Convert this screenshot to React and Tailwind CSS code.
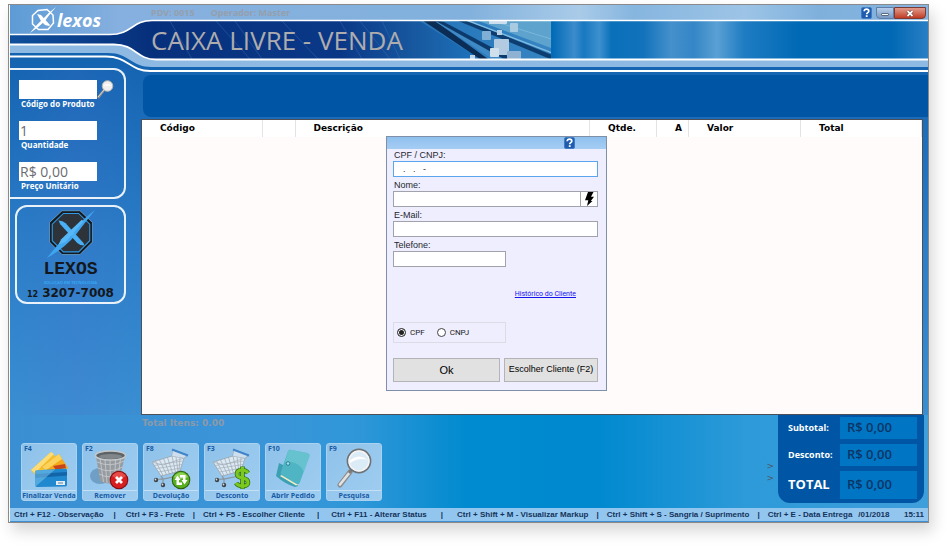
import { useState } from 'react';

const columns = [
  { label: 'Código', width: 'w-[120px]' },
  { label: '', width: 'w-[33px]' },
  { label: 'Descrição', width: '' },
  { label: 'Qtde.', width: 'w-[67px]' },
  { label: 'A', width: 'w-[32px]' },
  { label: 'Valor', width: 'w-[112px]' },
  { label: 'Total', width: 'w-[121px]' },
];

const shortcuts = [
  { text: 'Ctrl + F12 - Observação', gap: 'px-2.5' },
  { text: 'Ctrl + F3 - Frete', gap: 'px-2' },
  { text: 'Ctrl + F5 - Escolher Cliente', gap: 'px-3' },
  { text: 'Ctrl + F11 - Alterar Status', gap: 'px-3.5' },
  { text: 'Ctrl + Shift + M - Visualizar Markup', gap: 'px-2' },
  { text: 'Ctrl + Shift + S - Sangria / Suprimento', gap: 'px-2' },
];

const HelpIcon = () => (
  <svg width="11" height="12" viewBox="0 0 11 12" aria-hidden="true">
    <rect x="0.5" y="0.5" width="10" height="11" rx="1.5" fill="#1f5cae" stroke="#3f7cc4" />
    <path d="M3.2 4.3C3.2 2.9 4.1 2.2 5.5 2.2S7.8 3 7.8 4.2C7.8 5.6 5.7 5.6 5.7 7.2" fill="none" stroke="#fff" strokeWidth="1.7" />
    <rect x="4.8" y="8.2" width="1.8" height="1.8" fill="#fff" />
  </svg>
);

const CartBody = () => (
  <g fill="none">
    <path d="M3 14L23 8L35 10L31 23L12 28Z" fill="#e8eef4" fillOpacity="0.85" stroke="#98a3ae" strokeWidth="0.8" />
    <path d="M6.500 13L14 27.500M10.500 12L17.500 26.500M14.500 10.500L20.500 26M18.500 9.500L23.500 25M23 8L26.500 24.500M27 9L29 24M31 9.500L30 23" stroke="#9aa4ae" strokeWidth="0.7" />
    <path d="M5 17.500L33.500 13M7.500 20.500L33 16.500M9.500 24L32 20" stroke="#a5aeb7" strokeWidth="0.7" />
    <path d="M3 14L14 17L35 10" stroke="#a9b3bd" strokeWidth="0.8" />
    <path d="M24 2L23 8M38 8L35 10" stroke="#9aa6b2" strokeWidth="1" />
    <path d="M24 2L23 8L35 10L38 7Z" fill="#dbe5ef" fillOpacity="0.8" />
    <path d="M23 1.500L39 7.500" stroke="#3f84ca" strokeWidth="2" />
    <path d="M12 28L14 31L29 28M7 31.500L14 31L14 36" stroke="#8a949e" strokeWidth="1.200" />
    <ellipse cx="7" cy="32" rx="2.200" ry="2.200" fill="#3d4349" />
    <ellipse cx="14" cy="37" rx="2.200" ry="2.200" fill="#3d4349" />
    <circle cx="6.500" cy="31.500" r="0.9" fill="#d6dadd" />
    <circle cx="13.500" cy="36.500" r="0.9" fill="#d6dadd" />
  </g>
);

const CardsIcon = () => (
  <svg width="44" height="40" viewBox="0 0 44 40" aria-hidden="true">
    <path d="M4 22L24 4L29 9L10 29Z" fill="#f2bf2e" />
    <path d="M4 22L24 4L27 6L8 25Z" fill="#fbdc76" />
    <path d="M14 19L32 6L41 20L30 28Z" fill="#f4a81c" />
    <path d="M15 19L32 6L35 11L19 22Z" fill="#fcd25a" />
    <path d="M26 18L38 16L39 20L29 22Z" fill="#c8451c" />
    <path d="M9 22.500L38 20.500Q40 20.500 40 22V37Q40 38.500 38 38.500L10 39Q8 39 8 37V24Q8 22.500 9 22.500Z" fill="#2088ce" />
    <path d="M8 26L40 24V27.500L8 30Z" fill="#1464a8" />
    <path d="M8 39L28 21.500L9 22.500Q8 22.500 8 24Z" fill="#7cc4ec" fillOpacity="0.55" />
    <rect x="29" y="33" width="9" height="4" fill="#e6eef4" />
    <path d="M31 35H36" stroke="#5b7fa0" strokeWidth="1" />
  </svg>
);

const TrashIcon = () => (
  <svg width="44" height="42" viewBox="0 0 44 42" aria-hidden="true">
    <ellipse cx="12" cy="28" rx="10" ry="8" fill="#5b8bb0" fillOpacity="0.65" />
    <path d="M8 8L12 33Q21 38 31 33L37 8Z" fill="#969b9f" />
    <path d="M12 10L15.500 34M17 12L19 35M22 12L22.500 35.500M27.500 12L26.500 35M32.500 10.500L29.500 34M9 14Q22 20 36 13M10 20Q22 26 34.500 19M11 26Q22 32 33 25" stroke="#c9cdd0" strokeWidth="0.8" fill="none" />
    <ellipse cx="22.500" cy="7.500" rx="15" ry="4.500" fill="#5d6267" stroke="#c4c8ca" strokeWidth="1.600" />
    <ellipse cx="22.500" cy="8.500" rx="11.500" ry="2.600" fill="#80868a" />
    <circle cx="31" cy="32" r="9.300" fill="#7c0f12" />
    <circle cx="31" cy="32" r="8.300" fill="#d71f22" />
    <path d="M24 28Q31 20 38 28Q31 33 24 28Z" fill="#f06a62" fillOpacity="0.6" />
    <path d="M28 29L34 35M34 29L28 35" stroke="#fff" strokeWidth="2.800" />
  </svg>
);

const ReturnIcon = () => (
  <svg width="44" height="42" viewBox="0 0 44 42" aria-hidden="true">
    <CartBody />
    <circle cx="32" cy="32" r="9.300" fill="#2f5b10" />
    <circle cx="32" cy="32" r="8.300" fill="#58b021" />
    <path d="M24.500 29Q32 20 39.500 29Q32 33 24.500 29Z" fill="#b5e77c" fillOpacity="0.6" />
    <path d="M25.500 32L28.500 27.500L31.500 32H30V34.500H33V37H27.500V32ZM38.500 32L35.500 36.500L32.500 32H34V29.500H31V27H36.500V32Z" fill="#fff" />
  </svg>
);

const DollarIcon = () => (
  <svg width="44" height="42" viewBox="0 0 44 42" aria-hidden="true">
    <CartBody />
    <path d="M38 25Q36 22 32 22Q27 22 27 26Q27 29 32.500 30Q38 31 38 34.500Q38 38 32.500 38Q28 38 26 35M32.500 18.500V41" fill="none" stroke="#2f7411" strokeWidth="4.600" />
    <path d="M38 25Q36 22 32 22Q27 22 27 26Q27 29 32.500 30Q38 31 38 34.500Q38 38 32.500 38Q28 38 26 35M32.500 19V40.500" fill="none" stroke="#7cc81e" strokeWidth="3" />
  </svg>
);

const FolderIcon = () => (
  <svg width="44" height="40" viewBox="0 0 44 40" aria-hidden="true">
    <path d="M5 28L8 15L12 17L27 38L24 39Q14 36 5 28Z" fill="#3d9fb4" />
    <path d="M9 28L25 37.500L28 36L12 26Z" fill="#f3efc3" />
    <path d="M17 3Q18 1 21 2L36 5Q39 6 38.500 8L29 34Q28 37.500 25.500 36L11 27.500Q9 26.500 10 23.500Z" fill="#4fb4c3" />
    <path d="M17 3Q18 1 21 2L36 5Q39 6 38.500 8L33 24Q27 12 14 14Z" fill="#74ccd6" fillOpacity="0.6" />
    <circle cx="17" cy="15.500" r="1.800" fill="#a4e0e8" stroke="#22788c" strokeWidth="0.9" />
  </svg>
);

const SearchIcon = () => (
  <svg width="44" height="40" viewBox="0 0 44 40" aria-hidden="true">
    <path d="M8 37L18 24" stroke="#8c8c8c" strokeWidth="5" strokeLinecap="round" />
    <path d="M8 36.500L18 24" stroke="#e3e3e3" strokeWidth="2.600" strokeLinecap="round" />
    <path d="M17 25L21 20" stroke="#7b7b7b" strokeWidth="3" />
    <circle cx="27" cy="13" r="11.500" fill="#d6e8f5" stroke="#6f7376" strokeWidth="1.800" />
    <circle cx="27" cy="13" r="10" fill="#dcecf7" stroke="#f5f5f5" strokeWidth="1.400" />
    <path d="M18 12Q27 5 36 12Q27 9 18 15Z" fill="#fff" />
  </svg>
);

const actions = [
  { hotkey: 'F4', label: 'Finalizar Venda', Icon: CardsIcon },
  { hotkey: 'F2', label: 'Remover', Icon: TrashIcon },
  { hotkey: 'F8', label: 'Devolução', Icon: ReturnIcon },
  { hotkey: 'F3', label: 'Desconto', Icon: DollarIcon },
  { hotkey: 'F10', label: 'Abrir Pedido', Icon: FolderIcon },
  { hotkey: 'F9', label: 'Pesquisa', Icon: SearchIcon },
];

// Curved bands behind the title, they run on past the right edge
const HeaderArt = () => (
  <svg className="absolute inset-x-0 top-0 h-[72px] w-full" aria-hidden="true">
    <defs>
      <linearGradient id="topBand" gradientUnits="userSpaceOnUse" x1="0" y1="0" x2="918" y2="0">
        <stop offset="0" stopColor="#5d9bd6" />
        <stop offset="0.12" stopColor="#86b0df" />
        <stop offset="0.5" stopColor="#82b1dd" />
        <stop offset="0.62" stopColor="#a9cbe8" />
        <stop offset="0.68" stopColor="#86b5df" />
        <stop offset="0.8" stopColor="#9dc4e6" />
        <stop offset="0.88" stopColor="#7fb0dc" />
        <stop offset="1" stopColor="#86b4e0" />
      </linearGradient>
      <linearGradient id="darkBand" gradientUnits="userSpaceOnUse" x1="0" y1="0" x2="918" y2="0">
        <stop offset="0" stopColor="#0e4f9c" />
        <stop offset="0.15" stopColor="#07307c" />
        <stop offset="0.36" stopColor="#0a3887" />
        <stop offset="0.44" stopColor="#17589f" />
        <stop offset="0.5" stopColor="#1d70b8" />
        <stop offset="0.588" stopColor="#4a92c8" />
        <stop offset="0.59" stopColor="#0069b5" />
        <stop offset="0.615" stopColor="#3b8ccb" />
        <stop offset="0.625" stopColor="#1878c0" />
        <stop offset="0.642" stopColor="#3d90ce" />
        <stop offset="0.655" stopColor="#0a70ba" />
        <stop offset="0.69" stopColor="#1272bb" />
        <stop offset="0.72" stopColor="#4590cc" />
        <stop offset="0.745" stopColor="#3486c6" />
        <stop offset="0.77" stopColor="#5aa0d4" />
        <stop offset="0.8" stopColor="#1e7cc2" />
        <stop offset="0.86" stopColor="#0069b5" />
        <stop offset="0.96" stopColor="#0068b4" />
        <stop offset="1" stopColor="#2a7fc4" />
      </linearGradient>
      <clipPath id="photoClip">
        <rect x="140" y="16" width="401" height="38" />
      </clipPath>
    </defs>
    <path d="M0 0H3000V16H142C122 16 122 29 100 29H0Z" fill="url(#topBand)" />
    <path d="M0 30H100C122 30 122 16 142 16H3000V55H146C126 55 126 39.500 104 39.500H0Z" fill="url(#darkBand)" />
    <g clipPath="url(#photoClip)">
      <path d="M408 15L500 15L600 54L470 54Z" fill="#2f7fbf" fillOpacity="0.7" />
      <path d="M412 15L424 15L478 54L470 54Z" fill="#0a2c55" />
      <path d="M426 17L434 17L492 54L482 54Z" fill="#3f8ac4" />
      <path d="M424 15L434 17L504 54L494 54Z" fill="#0c3a6c" />
      <path d="M446 15L456 15L545 51V56Z" fill="#0e3e70" />
      <path d="M456 15L545 49" stroke="#7fbbe2" strokeWidth="1.500" />
      <path d="M466 15H541V43Z" fill="#5ea3cd" />
      <path d="M480 15L541 34" stroke="#86c0e0" strokeOpacity="0.7" />
      <path d="M160 16L182 54M206 16L240 54M225 16L252 54M272 16L308 54M330 16L352 54M350 16L380 54M372 16L390 54" stroke="#4a7cc0" strokeOpacity="0.35" />
      <rect x="479" y="14" width="18" height="5" rx="1" fill="#c9ddec" />
      <rect x="500" y="18" width="8" height="9" rx="1" fill="#a9cbe2" />
      <rect x="472" y="26" width="9" height="9" rx="1" fill="#7fafd4" />
      <rect x="487" y="25" width="5" height="5" fill="#b5d0e4" />
      <rect x="484" y="34" width="15" height="16" rx="1" fill="#b3cbe0" />
      <rect x="480" y="43" width="9" height="9" rx="1" fill="#cfdfec" />
      <rect x="497" y="46" width="14" height="8" rx="1" fill="#8fb2d2" />
      <rect x="460" y="50" width="5" height="5" fill="#bcd4e8" />
    </g>
    <path d="M0 40H104C126 40 126 55 146 55H3000V62H142C120 62 120 48 98 48H0Z" fill="#8db9e2" />
    <path d="M0 29.500H100C122 29.500 122 15.500 142 15.500H3000" fill="none" stroke="#fff" strokeWidth="1.600" />
    <path d="M0 39.500H104C126 39.500 126 54.500 146 54.500H3000" fill="none" stroke="#fff" strokeWidth="1.800" />
    <path d="M0 51.500H96C118 51.500 120 66 140 66H3000" fill="none" stroke="#fff" strokeWidth="1.800" />
  </svg>
);

const LexosMark = () => (
  <svg className="h-[26px] w-7" viewBox="0 0 28 26" aria-hidden="true">
    <path d="M9 3.500L18 2.500L24 8L24.500 16L19 22.500L9.500 22.500L3.500 17L3.500 8.500Z" fill="none" stroke="#fff" strokeWidth="1.500" />
    <path d="M1 26Q9 16 13 13Q20 5 27 0Q20 8 16 14Q10 20 1 26Z" fill="#fff" />
    <path d="M8 7L12 8L21 18L20 19L16 18L12 14Z" fill="#fff" />
  </svg>
);

const SupportLogo = () => (
  <svg width="58" height="50" viewBox="0 0 60 56" aria-hidden="true">
    <path d="M20 2H40L54 15V37L40 51H20L6 37V15Z" fill="#15191e" stroke="#8cc6f0" strokeOpacity="0.6" strokeWidth="1" />
    <path d="M21.500 5H38.500L51 17V35.500L38.500 48H21.500L9 35.500V17Z" fill="#2d3339" stroke="#2d9bea" strokeWidth="1.200" />
    <path d="M3 55Q16 38 26 30Q42 12 57 1Q45 16 36 28Q24 43 3 55Z" fill="#3fa5ee" />
    <path d="M16 13Q21 13 24 16L44 38L45 41Q40 41 37 38L18 17Z" fill="#49b0f5" />
    <path d="M42 12L44 14L24 37L16 40L19 34Z" fill="#58b7f6" />
  </svg>
);

const ProductField = ({ id, label, value, onChange }) => (
  <div className="w-[78px]">
    <input
      id={id}
      className="block h-[19px] w-full bg-white px-px text-[14px] leading-[19px] text-[#6b6b70] outline-none"
      value={value}
      onChange={onChange}
    />
    <label htmlFor={id} className="block pl-0.5 text-[8px] leading-[10px] font-bold whitespace-nowrap text-white">
      {label}
    </label>
  </div>
);

const TotalRow = ({ label, value, big }) => (
  <div className="flex items-center">
    <span className={`w-[52px] font-bold text-white ${big ? 'text-[13px]' : 'text-[9px]'}`}>{label}</span>
    <span className={`flex flex-1 items-center bg-[#0075c4] pl-[7px] text-[13px] font-semibold text-[#0c3566] ${big ? 'h-7' : 'h-[22px]'}`}>
      {value}
    </span>
  </div>
);

const CustomerDialog = () => {
  const [docType, setDocType] = useState('CPF');
  const [documentId, setDocumentId] = useState('  .   .   -');

  const inputClass = 'block h-4 w-full border border-[#a0a3ac] bg-white px-1 text-[9px] outline-none';
  const labelClass = 'block pl-px text-[9px] leading-[12px] text-[#26262e]';

  return (
    <div
      role="dialog"
      aria-label="Cliente"
      className="absolute top-4 left-[244px] w-[221px] border border-[#7f8fa8] bg-[#eeeeff] font-['Liberation_Sans',sans-serif]"
    >
      <div className="flex h-3 justify-end bg-linear-to-b from-[#8fc0ee] to-[#a5cdf3] pr-[31px]">
        <button type="button" aria-label="Ajuda">
          <HelpIcon />
        </button>
      </div>
      <form className="flex flex-col gap-0.5 pr-2 pb-2 pl-1.5" onSubmit={(e) => e.preventDefault()}>
        <div>
          <label htmlFor="documento" className={labelClass}>CPF / CNPJ:</label>
          <input
            id="documento"
            className="block h-4 w-full border border-[#5aa5ee] bg-white px-1 text-[9px] text-[#333] outline-none"
            value={documentId}
            onChange={(e) => setDocumentId(e.target.value)}
          />
        </div>
        <div>
          <label htmlFor="nome" className={labelClass}>Nome:</label>
          <div className="flex">
            <input id="nome" className={inputClass} />
            <button type="button" aria-label="Buscar" className="flex h-4 w-[17px] shrink-0 items-center justify-center border border-l-0 border-[#a0a3ac] bg-white">
              <svg width="11" height="14" viewBox="0 0 11 14" aria-hidden="true">
                <path d="M4 0L9.500 0L7 4.800L10 4.800L6.800 9L8.500 9L3 14L4.300 8.200L1 8.200Z" fill="#000" />
              </svg>
            </button>
          </div>
        </div>
        <div>
          <label htmlFor="email" className={labelClass}>E-Mail:</label>
          <input id="email" className={inputClass} />
        </div>
        <div className="w-[113px]">
          <label htmlFor="telefone" className={labelClass}>Telefone:</label>
          <input id="telefone" className={inputClass} />
        </div>
        <a href="#historico" className="mt-5 self-end pr-[22px] font-['Roboto',sans-serif] text-[7px] leading-[10px] text-[#1414ee] underline">
          Histórico do Cliente
        </a>
        <fieldset className="mt-[21px] w-[113px] border border-[#dcdce6] px-[3px] font-['Roboto',sans-serif] text-[8px] text-[#222]">
          <div className="flex h-[19px] items-center gap-3">
            {['CPF', 'CNPJ'].map((type) => (
              <label key={type} className="flex items-center gap-1">
                <input
                  type="radio"
                  name="tipo"
                  className="size-[9px] appearance-none rounded-full border border-[#444] bg-white checked:bg-[#222] checked:shadow-[inset_0_0_0_1px_white]"
                  checked={docType === type}
                  onChange={() => setDocType(type)}
                />
                {type}
              </label>
            ))}
          </div>
        </fieldset>
        <div className="mt-[13px] flex gap-1">
          <button type="submit" className="h-6 flex-1 border border-[#b4b4b6] bg-[#e1e1e1] text-[11px] text-black">
            Ok
          </button>
          <button type="button" className="h-6 w-[94px] border border-[#b4b4b6] bg-[#e1e1e1] text-[9px] whitespace-nowrap text-black">
            Escolher Cliente (F2)
          </button>
        </div>
      </form>
    </div>
  );
};

const App = () => {
  const [code, setCode] = useState('');
  const [quantity, setQuantity] = useState('1');
  const [price, setPrice] = useState('R$ 0,00');

  return (
    <div className="bg-white pt-1 pr-5 pb-6 pl-2 font-['Open_Sans',sans-serif]">
      <div className="border border-[#8a8a8c] bg-white pl-px shadow-[4px_8px_14px_rgba(0,0,0,0.16)]">
        <div className="bg-linear-to-b from-[#0b5cab] via-[#2a7cc7] via-45% to-[#3a8fd2] to-80%">
          {/* Title */}
          <header className="relative h-[63px]">
            <HeaderArt />
            <div className="relative flex items-start">
              <div className="flex w-[141px] items-center pt-0.5 pl-[19px]">
                <LexosMark />
                <span className="text-[18px] leading-6 font-bold text-white italic">lexos</span>
              </div>
              <div className="flex-1">
                <div className="flex h-4 items-center gap-4 text-[9px] font-bold text-[#959fac]">
                  <span>PDV: 0015</span>
                  <span>Operador: Master</span>
                </div>
                <h1 className="text-[26px] leading-[38px] whitespace-nowrap text-[#aeacae]">CAIXA LIVRE - VENDA</h1>
              </div>
              <div className="flex items-start pt-0.5 pr-0.5">
                <button type="button" aria-label="Ajuda" className="mr-1">
                  <HelpIcon />
                </button>
                <button type="button" aria-label="Minimizar" className="flex h-3 w-[18px] items-end justify-center rounded-bl-sm border border-[#5f7fa6] bg-linear-to-b from-[#b8cfea] to-[#7798c4] pb-0.5">
                  <span className="h-[3px] w-2 rounded-[1px] border border-[#5a6c84] bg-white" />
                </button>
                <button type="button" aria-label="Fechar" className="flex h-3 w-8 items-center justify-center rounded-br-sm border border-[#7c3a35] bg-linear-to-b from-[#e09a8a] to-[#c03a22]">
                  <svg width="8" height="7" viewBox="0 0 8 7" aria-hidden="true">
                    <path d="M1.500 1L6.500 6M6.500 1L1.500 6" stroke="#5c2a28" strokeWidth="3" />
                    <path d="M1.500 1L6.500 6M6.500 1L1.500 6" stroke="#fff" strokeWidth="1.800" />
                  </svg>
                </button>
              </div>
            </div>
          </header>

          <div className="flex">
            <aside className="w-[131px] shrink-0 bg-linear-to-r from-transparent via-[#5a6fd0]/15 to-transparent">
              <div className="relative mr-[15px] flex flex-col gap-3 rounded-r-xl border-2 border-l-0 border-white/90 pt-2.5 pb-1.5 pl-[9px]">
                <ProductField id="codigo" label="Código do Produto" value={code} onChange={(e) => setCode(e.target.value)} />
                <ProductField id="quantidade" label="Quantidade" value={quantity} onChange={(e) => setQuantity(e.target.value)} />
                <ProductField id="preco" label="Preço Unitário" value={price} onChange={(e) => setPrice(e.target.value)} />
                <button type="button" aria-label="Buscar produto" className="absolute top-2.5 right-2.5">
                  <svg width="18" height="19" viewBox="0 0 18 19" aria-hidden="true">
                    <path d="M2 18L8 10" stroke="#8d8d8d" strokeWidth="2.400" />
                    <path d="M2 17L8 10" stroke="#d9d9d9" strokeWidth="1" />
                    <circle cx="11.500" cy="6" r="5.300" fill="#efefef" stroke="#b5b5b0" />
                    <path d="M7.500 6Q11.500 2 15.500 6Q11.500 5 7.500 6Z" fill="#fff" />
                  </svg>
                </button>
              </div>
              <div className="mt-1.5 mr-[15px] ml-[5px] flex flex-col items-center rounded-xl border-2 border-white/90 pt-0.5">
                <SupportLogo />
                <span className="font-['Liberation_Mono',monospace] text-[18px] leading-[21px] font-bold text-[#14181d]">LEXOS</span>
                <span className="text-[4px] leading-[6px] font-bold text-[#35a7f5]">SOLUÇÃO EM TECNOLOGIA</span>
                <span className="flex items-baseline gap-1 font-['DejaVu_Sans',sans-serif] text-[12px] leading-[14px] font-bold text-[#14181d]">
                  <span className="text-[8px]">12</span>
                  3207-7008
                </span>
              </div>
            </aside>

            <main className="min-w-0 flex-1">
              <div className="mt-[7px] mb-0.5 ml-0.5 h-[42px] rounded-l-lg bg-[#0056a4]" />
              <div className="relative mr-[5px] min-h-[296px] border border-[#4c4f55] bg-[#fffbfb]">
                <table className="w-full table-fixed font-['DejaVu_Sans',sans-serif] text-[9px]">
                  <thead className="bg-white">
                    <tr>
                      {columns.map((column, index) => (
                        <th key={index} className={`h-[17px] border-r border-[#e4e4e6] p-0 pl-[18px] text-left font-bold text-black ${column.width}`}>
                          {column.label}
                        </th>
                      ))}
                    </tr>
                  </thead>
                </table>
                <CustomerDialog />
              </div>
            </main>
          </div>

          <div className="flex justify-between bg-[linear-gradient(to_right,#3a8fd2,#3a95d8_28%,#2f97d8_38%,#008acf_50%,#0089cf_64%,#2d9ad9_80%,#3f9fdb)]">
            <div>
              <p className="pt-px pl-[132px] font-['DejaVu_Sans',sans-serif] text-[9px] leading-[14px] font-bold text-[#8b9aab]">
                Total Itens: 0.00
              </p>
              <div className="flex gap-[5px] pt-[13px] pb-[7px] pl-[11px]">
                {actions.map(({ hotkey, label, Icon }) => (
                  <button
                    key={hotkey}
                    type="button"
                    className="relative flex h-[58px] w-14 flex-col items-center justify-between rounded-[3px] border border-[#a9d2f1] bg-linear-to-br from-[#8fc2ea] to-[#9fcdf0] text-[#175ba6]"
                  >
                    <span className="absolute top-0 left-0.5 text-[7px] leading-[9px] font-bold">{hotkey}</span>
                    <span className="pt-1">
                      <Icon />
                    </span>
                    <span className="absolute inset-x-0 bottom-0 border-t border-[#c3e0f5] text-center text-[7px] leading-[9px] font-bold whitespace-nowrap">
                      {label}
                    </span>
                  </button>
                ))}
              </div>
            </div>
            <div className="flex items-start">
              <div className="flex flex-col pt-[45px] pr-1 font-['DejaVu_Sans',sans-serif] text-[9px] leading-3 text-[#4c5a68]">
                <span>&gt;</span>
                <span>&gt;</span>
              </div>
              <div className="mr-1 flex w-[146px] flex-col gap-[5px] rounded-b-xl bg-[#0056a4] pt-0.5 pr-[7px] pb-1 pl-2.5">
                <TotalRow label="Subtotal:" value="R$ 0,00" />
                <TotalRow label="Desconto:" value="R$ 0,00" />
                <TotalRow label="TOTAL" value="R$ 0,00" big />
              </div>
            </div>
          </div>

          {/* Keyboard shortcuts */}
          <footer className="flex h-[14px] items-center overflow-hidden border-b border-[#3f8fd0] bg-[#93c6ee] px-1 font-['Liberation_Sans',sans-serif] text-[8px] font-bold whitespace-nowrap text-[#14335c]">
            {shortcuts.map(({ text, gap }) => (
              <span key={text} className="flex">
                {text}
                <span className={gap}>|</span>
              </span>
            ))}
            <span>Ctrl + E - Data Entrega</span>
            <span className="ml-1.5">/01/2018</span>
            <span className="ml-auto">15:11</span>
          </footer>
        </div>
      </div>
    </div>
  );
};

export default App;
